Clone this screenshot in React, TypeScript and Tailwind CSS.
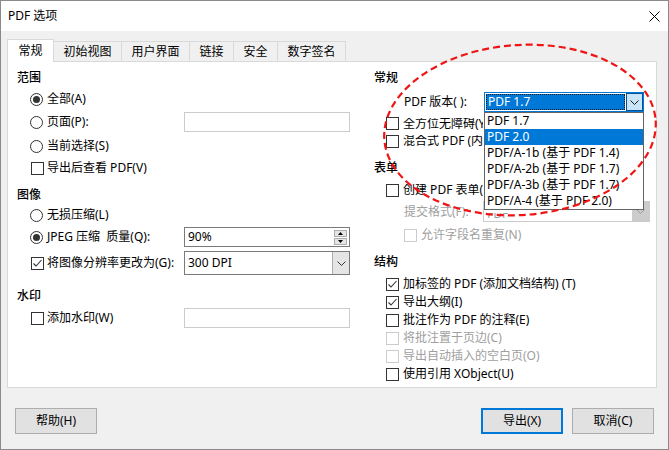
import React from 'react';

function CheckBox({ checked = false, disabled = false }: { checked?: boolean; disabled?: boolean }) {
  return (
    <span
      className={
        'w-[13px] h-[13px] border bg-white flex items-center justify-center shrink-0 ' +
        (disabled ? 'border-[#cccccc]' : 'border-[#333333]')
      }
    >
      {checked && (
        <svg width="11" height="11" viewBox="0 0 11 11">
          <polyline points="1.5,5.5 4,8 9.5,2" fill="none" stroke="#333333" strokeWidth="1.1" />
        </svg>
      )}
    </span>
  );
}

function Radio({ checked = false }: { checked?: boolean }) {
  return (
    <span className="w-[13px] h-[13px] rounded-full border border-[#333333] bg-white flex items-center justify-center shrink-0">
      {checked && <span className="w-[7px] h-[7px] rounded-full bg-[#333333]" />}
    </span>
  );
}

function Chevron({ color = '#333333' }: { color?: string }) {
  return (
    <svg width="9" height="5" viewBox="0 0 9 5">
      <polyline points="0.5,0.5 4.5,4.5 8.5,0.5" fill="none" stroke={color} strokeWidth="1" />
    </svg>
  );
}

const versions = [
  'PDF 1.7',
  'PDF 2.0',
  'PDF/A-1b (基于 PDF 1.4)',
  'PDF/A-2b (基于 PDF 1.7)',
  'PDF/A-3b (基于 PDF 1.7)',
  'PDF/A-4 (基于 PDF 2.0)',
];

const tabs = [
  { label: '初始视图', w: 'w-[68px]' },
  { label: '用户界面', w: 'w-[68px]' },
  { label: '链接', w: 'w-[44px]' },
  { label: '安全', w: 'w-[44px]' },
  { label: '数字签名', w: 'w-[68px]' },
];

export default function App() {
  return (
    <div className="w-[669px] h-[450px] border border-[#8a8a8a] bg-[#f0f0f0] relative flex flex-col text-[12px] text-black leading-none font-['Noto_Sans','Noto_Sans_CJK_SC',sans-serif]">
      {/* Title bar */}
      <div className="h-[30px] bg-white flex items-center justify-between pl-[7px] pr-[8px] shrink-0">
        <span>PDF 选项</span>
        <svg width="11" height="11" viewBox="0 0 11 11">
          <path d="M0.5 0.5 L10.5 10.5 M10.5 0.5 L0.5 10.5" stroke="#000" strokeWidth="1" />
        </svg>
      </div>

      <div className="pl-[6px] pt-[8px]">
        {/* Tabs */}
        <div className="flex items-end h-[22px]">
          <div className="w-[47px] h-[23px] -mb-px bg-white border border-[#d9d9d9] border-b-0 relative z-10 flex items-center justify-center">
            常规
          </div>
          {tabs.map((t) => (
            <div
              key={t.label}
              className={t.w + ' h-[20px] bg-[#f0f0f0] border border-[#d9d9d9] border-l-0 border-b-0 flex items-center justify-center'}
            >
              {t.label}
            </div>
          ))}
        </div>

        {/* Panel */}
        <div className="w-[650px] h-[327px] border border-[#d9d9d9] bg-white flex pl-[9px] gap-[24px]">
          {/* Left column */}
          <div className="w-[333px] flex flex-col">
            <div className="mt-[6px] h-[20px] flex items-center font-medium">范围</div>
            <div className="h-[22px] flex items-center pl-[13px] gap-[4px]">
              <Radio checked />
              <span>全部(A)</span>
            </div>
            <div className="h-[24px] flex items-center justify-between">
              <div className="flex items-center pl-[13px] gap-[4px]">
                <Radio />
                <span>页面(P):</span>
              </div>
              <div className="w-[166px] h-[20px] border border-[#cccccc] bg-white" />
            </div>
            <div className="h-[24px] flex items-center pl-[13px] gap-[4px]">
              <Radio />
              <span>当前选择(S)</span>
            </div>
            <div className="h-[20px] flex items-center pl-[14px] gap-[3px]">
              <CheckBox />
              <span>导出后查看 PDF(V)</span>
            </div>

            <div className="mt-[6px] h-[22px] flex items-center font-medium">图像</div>
            <div className="h-[18px] flex items-center pl-[13px] gap-[4px]">
              <Radio />
              <span>无损压缩(L)</span>
            </div>
            <div className="h-[26px] flex items-center justify-between">
              <div className="flex items-center pl-[13px] gap-[4px]">
                <Radio checked />
                <span>JPEG 压缩&nbsp;&nbsp;质量(Q):</span>
              </div>
              <div className="w-[166px] h-[20px] border border-[#7a7a7a] bg-white flex items-center justify-between pl-[3px] pr-[2px]">
                <span>90%</span>
                <div className="flex flex-col gap-px">
                  <div className="w-[13px] h-[7px] border border-[#adadad] bg-[#e5e5e5] flex items-center justify-center">
                    <svg width="5" height="3" viewBox="0 0 5 3">
                      <polygon points="0,3 2.5,0 5,3" fill="#000" />
                    </svg>
                  </div>
                  <div className="w-[13px] h-[7px] border border-[#adadad] bg-[#e5e5e5] flex items-center justify-center">
                    <svg width="5" height="3" viewBox="0 0 5 3">
                      <polygon points="0,0 2.5,3 5,0" fill="#000" />
                    </svg>
                  </div>
                </div>
              </div>
            </div>
            <div className="h-[26px] flex items-center justify-between">
              <div className="flex items-center pl-[14px] gap-[3px]">
                <CheckBox checked />
                <span>将图像分辨率更改为(G):</span>
              </div>
              <div className="w-[166px] h-[24px] border border-[#7a7a7a] bg-white flex items-center justify-between pl-[3px]">
                <span>300 DPI</span>
                <div className="w-[17px] h-full border-l border-[#adadad] bg-[#e5e5e5] flex items-center justify-center">
                  <Chevron />
                </div>
              </div>
            </div>

            <div className="mt-[10px] h-[20px] flex items-center font-medium">水印</div>
            <div className="h-[24px] flex items-center justify-between">
              <div className="flex items-center pl-[14px] gap-[3px]">
                <CheckBox />
                <span>添加水印(W)</span>
              </div>
              <div className="w-[166px] h-[20px] border border-[#cccccc] bg-white" />
            </div>
          </div>

          {/* Right column */}
          <div className="flex-1 flex flex-col">
            <div className="mt-[6px] h-[20px] flex items-center font-medium">常规</div>
            <div className="mt-[4px] h-[20px] flex items-center pl-[30px]">
              <span className="w-[80px]">PDF 版本( ):</span>
              <div className="relative w-[160px] h-[20px] border border-[#0078d7] bg-white flex">
                <div className="flex-1 m-px bg-[#0078d7] text-white flex items-center pl-[1px] border border-dotted border-[#1a1a1a]">
                  PDF 1.7
                </div>
                <div className="w-[17px] bg-[#cce4f7] border border-[#005499] flex items-center justify-center">
                  <Chevron color="#1a1a1a" />
                </div>
                {/* Open list */}
                <div className="absolute left-[-1px] top-[19px] w-[160px] bg-white border border-[#646464] z-20 flex flex-col">
                  {versions.map((v, i) => (
                    <div
                      key={v}
                      className={
                        'h-[16px] flex items-center pl-[2px] whitespace-nowrap ' +
                        (i === 1 ? 'bg-[#0078d7] text-white' : 'text-black')
                      }
                    >
                      {v}
                    </div>
                  ))}
                </div>
              </div>
            </div>
            <div className="mt-[2px] h-[19px] flex items-center pl-[12px] gap-[4px] whitespace-nowrap">
              <CheckBox />
              <span className="w-[80px] overflow-hidden">全方位无障碍(Y)</span>
            </div>
            <div className="h-[16px] flex items-center pl-[12px] gap-[4px] whitespace-nowrap">
              <CheckBox />
              <span className="w-[80px] overflow-hidden">混合式 PDF (内嵌 ODF)</span>
            </div>

            <div className="mt-[9px] h-[20px] flex items-center font-medium">表单</div>
            <div className="mt-[2px] h-[20px] flex items-center pl-[12px] gap-[4px] whitespace-nowrap">
              <CheckBox />
              <span className="w-[80px] overflow-hidden">创建 PDF 表单(M)</span>
            </div>
            <div className="mt-px h-[21px] flex items-center pl-[30px] text-[#a0a0a0]">
              <span className="w-[79px]">提交格式(F):</span>
              <div className="w-[167px] h-[21px] border border-[#cccccc] bg-white flex items-end justify-between pl-[3px]">
                <span className="h-[8px] overflow-hidden flex items-end leading-[12px] pb-[1px]">FDF</span>
                <div className="w-[17px] h-full bg-[#cccccc] flex items-center justify-center">
                  <Chevron color="#9a9a9a" />
                </div>
              </div>
            </div>
            <div className="mt-[3px] h-[20px] flex items-center pl-[30px] gap-[4px] text-[#a0a0a0]">
              <CheckBox disabled />
              <span>允许字段名重复(N)</span>
            </div>

            <div className="mt-[7px] h-[20px] flex items-center font-medium">结构</div>
            <div className="mt-[3px] flex flex-col">
              <div className="h-[18px] flex items-center pl-[12px] gap-[4px]">
                <CheckBox checked />
                <span>加标签的 PDF (添加文档结构) (T)</span>
              </div>
              <div className="h-[18px] flex items-center pl-[12px] gap-[4px]">
                <CheckBox checked />
                <span>导出大纲(I)</span>
              </div>
              <div className="h-[18px] flex items-center pl-[12px] gap-[4px]">
                <CheckBox />
                <span>批注作为 PDF 的注释(E)</span>
              </div>
              <div className="h-[18px] flex items-center pl-[12px] gap-[4px] text-[#a0a0a0]">
                <CheckBox disabled />
                <span>将批注置于页边(C)</span>
              </div>
              <div className="h-[18px] flex items-center pl-[12px] gap-[4px] text-[#a0a0a0]">
                <CheckBox disabled />
                <span>导出自动插入的空白页(O)</span>
              </div>
              <div className="h-[18px] flex items-center pl-[12px] gap-[4px]">
                <CheckBox />
                <span>使用引用 XObject(U)</span>
              </div>
            </div>
          </div>
        </div>
      </div>

      {/* Buttons */}
      <div className="mt-[20px] flex items-center justify-between pl-[14px] pr-[14px]">
        <button className="w-[82px] h-[26px] border border-[#adadad] bg-[#e1e1e1]">帮助(H)</button>
        <div className="flex gap-[9px]">
          <button className="w-[82px] h-[26px] border-2 border-[#0078d7] bg-[#e1e1e1]">导出(X)</button>
          <button className="w-[82px] h-[26px] border border-[#adadad] bg-[#e1e1e1]">取消(C)</button>
        </div>
      </div>

      {/* Red dashed annotation */}
      <svg className="absolute inset-0 pointer-events-none z-30" width="667" height="448" viewBox="0 0 667 448">
        <ellipse
          cx="519"
          cy="129"
          rx="136"
          ry="85"
          transform="rotate(-4 519 129)"
          fill="none"
          stroke="#f01414"
          strokeWidth="2.2"
          strokeDasharray="7 4"
        />
      </svg>
    </div>
  );
}
